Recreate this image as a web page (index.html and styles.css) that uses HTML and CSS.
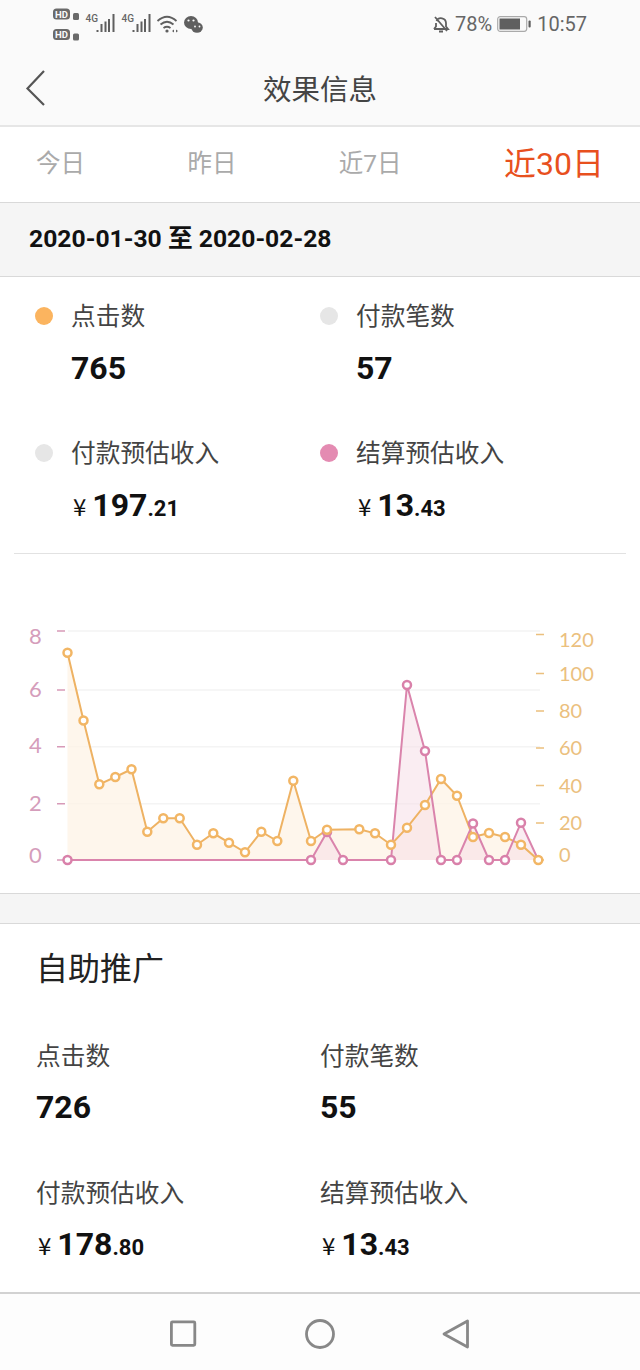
FILE: index.html
```html
<!DOCTYPE html>
<html lang="zh">
<head>
<meta charset="utf-8">
<title>效果信息</title>
<link rel="stylesheet" href="styles.css">
</head>
<body>
<div class="phone">
  <header class="top">
    <div class="status">
      <svg class="status-left" width="160" height="50" viewBox="0 0 160 50">
        <g class="ic">
          <rect x="1" y="8.500" width="17" height="11" rx="3.500"/>
          <text x="9.500" y="17.500" class="hd" text-anchor="middle">HD</text>
          <rect x="1" y="29" width="17" height="11" rx="3.500"/>
          <text x="9.500" y="38" class="hd" text-anchor="middle">HD</text>
          <rect x="21" y="13" width="6" height="7" rx="1.500"/>
          <rect x="21" y="33.500" width="6" height="7" rx="1.500"/>
        </g>
        <text x="33.500" y="22" class="g4">4G</text>
        <path class="fill" d="M44.500 32h2v-2h-2zM48.500 32h2v-8h-2zM52.500 32h2v-10.500h-2zM56 32h2v-13h-2zM60.500 32h2v-18h-2z"/>
        <text x="69.500" y="22" class="g4">4G</text>
        <path class="fill" d="M80.500 32h2v-2h-2zM84.500 32h2v-8h-2zM88.500 32h2v-10.500h-2zM92 32h2v-13h-2zM96.500 32h2v-18h-2z"/>
        <g class="wifi">
          <path d="M105.500 21q9.500-8.500 19 0M108.500 24.500q6.500-5.500 13 0M111.500 28q3.500-2.500 7 0"/>
        </g>
        <circle class="fill" cx="115" cy="31" r="1.600"/>
        <path class="fill" d="M120 31l2-1.500v3zM126 31l-2-1.500v3z"/>
        <g class="fill">
          <ellipse cx="139" cy="22.500" rx="7" ry="6.500"/>
          <ellipse cx="145" cy="27.500" rx="5.800" ry="5.200"/>
        </g>
        <circle cx="136.500" cy="20.500" r="1.100" fill="#fafafa"/>
        <circle cx="141.500" cy="20.500" r="1.100" fill="#fafafa"/>
        <circle cx="143" cy="26.500" r=".9" fill="#fafafa"/>
        <circle cx="147.500" cy="26.500" r=".9" fill="#fafafa"/>
      </svg>
      <div class="status-right">
        <svg width="18" height="18" viewBox="0 0 18 18" class="bell">
          <path d="M2 14h14l-2-2.500V8a5 5 0 0 0-9.500-2M4 8v3.500L2 14M7 16.500h4M3 2l12 14"/>
        </svg>
        <span class="pct">78%</span>
        <svg width="34" height="18" viewBox="0 0 34 18" class="batt">
          <rect x=".7" y="1.700" width="29" height="14.600" rx="2.500"/>
          <rect class="batt-in" x="2.500" y="3.500" width="20.500" height="11"/>
          <rect class="batt-in" x="31.500" y="5.500" width="2.200" height="7" rx="1"/>
        </svg>
        <span class="clock">10:57</span>
      </div>
    </div>
    <div class="nav">
      <svg class="back" width="22" height="38" viewBox="0 0 22 38"><path d="M19 2L2.500 19.500 19 36"/></svg>
      <h1 class="title">效果信息</h1>
    </div>
  </header>

  <nav class="tabs">
    <span class="tab">今日</span>
    <span class="tab">昨日</span>
    <span class="tab">近7日</span>
    <span class="tab active">近30日</span>
  </nav>

  <div class="range">2020-01-30 至 2020-02-28</div>

  <section class="summary">
    <div class="grid">
      <div class="metric">
        <div class="label"><i class="dot orange"></i>点击数</div>
        <div class="value">765</div>
      </div>
      <div class="metric">
        <div class="label"><i class="dot grey"></i>付款笔数</div>
        <div class="value">57</div>
      </div>
      <div class="metric">
        <div class="label"><i class="dot grey"></i>付款预估收入</div>
        <div class="value"><span class="yen">¥</span>197<small>.21</small></div>
      </div>
      <div class="metric">
        <div class="label"><i class="dot pink"></i>结算预估收入</div>
        <div class="value"><span class="yen">¥</span>13<small>.43</small></div>
      </div>
    </div>
  </section>

  <section class="chart">
    <svg width="640" height="339" viewBox="0 554 640 339">
      <g class="grid-lines">
        <path d="M68 631H540M68 690H540M68 746.700H540M68 803.700H540"/>
      </g>
      <g class="ticks-l">
        <path d="M57 631h8M57 690h8M57 746.700h8M57 803.700h8M57 860h8"/>
      </g>
      <g class="ticks-r">
        <path d="M536 634.500h8M536 673.500h8M536 711h8M536 748h8M536 785.500h8M536 823h8M536 860h8"/>
      </g>
      <g class="axis-l">
        <text x="29" y="644">8</text>
        <text x="29" y="697">6</text>
        <text x="29" y="753">4</text>
        <text x="29" y="811">2</text>
        <text x="29" y="863">0</text>
      </g>
      <g class="axis-r">
        <text x="559" y="647">120</text>
        <text x="559" y="681">100</text>
        <text x="559" y="718">80</text>
        <text x="559" y="755">60</text>
        <text x="559" y="793">40</text>
        <text x="559" y="830">20</text>
        <text x="559" y="862">0</text>
      </g>
      <path class="area-o" d="M67.500 860V652.700L83.500 720.500 99.300 784.300 115.300 777 131.500 769.300 147.300 831.700 163.300 818.300 179.700 818.300 197 844.700 213.300 833.300 229 842.700 245 852.300 261.300 831.700 277.300 841 293.300 780.700 311 841 327 829.700 359.300 829.300 375 833.300 391 844.700 407 827.700 425 805 441 779 457 795.700 473 837 489 833 505 837 521 844.700 538.300 860Z"/>
      <path class="area-p" d="M311 860L327 832 343 860H391L407 685 425 751 441 860H457L473 823.500 489 860H505L521 822.700 538.300 860Z"/>
      <path class="line-o" d="M67.500 652.700L83.500 720.500 99.300 784.300 115.300 777 131.500 769.300 147.300 831.700 163.300 818.300 179.700 818.300 197 844.700 213.300 833.300 229 842.700 245 852.300 261.300 831.700 277.300 841 293.300 780.700 311 841 327 829.700 359.300 829.300 375 833.300 391 844.700 407 827.700 425 805 441 779 457 795.700 473 837 489 833 505 837 521 844.700 538.300 860"/>
      <path class="line-p" d="M67.500 860H311L327 832 343 860H391L407 685 425 751 441 860H457L473 823.500 489 860H505L521 822.700 538.300 860"/>
      <g class="pts-p">
        <circle cx="67.500" cy="860" r="4"/><circle cx="311" cy="860" r="4"/><circle cx="327" cy="832" r="4"/>
        <circle cx="343" cy="860" r="4"/><circle cx="391" cy="860" r="4"/><circle cx="407" cy="685" r="4"/>
        <circle cx="425" cy="751" r="4"/><circle cx="441" cy="860" r="4"/><circle cx="457" cy="860" r="4"/>
        <circle cx="473" cy="823.500" r="4"/><circle cx="489" cy="860" r="4"/><circle cx="505" cy="860" r="4"/>
        <circle cx="521" cy="822.700" r="4"/>
      </g>
      <g class="pts-o">
        <circle cx="67.500" cy="652.700" r="4"/><circle cx="83.500" cy="720.500" r="4"/><circle cx="99.300" cy="784.300" r="4"/>
        <circle cx="115.300" cy="777" r="4"/><circle cx="131.500" cy="769.300" r="4"/><circle cx="147.300" cy="831.700" r="4"/>
        <circle cx="163.300" cy="818.300" r="4"/><circle cx="179.700" cy="818.300" r="4"/><circle cx="197" cy="844.700" r="4"/>
        <circle cx="213.300" cy="833.300" r="4"/><circle cx="229" cy="842.700" r="4"/><circle cx="245" cy="852.300" r="4"/>
        <circle cx="261.300" cy="831.700" r="4"/><circle cx="277.300" cy="841" r="4"/><circle cx="293.300" cy="780.700" r="4"/>
        <circle cx="311" cy="841" r="4"/><circle cx="327" cy="829.700" r="4"/><circle cx="359.300" cy="829.300" r="4"/>
        <circle cx="375" cy="833.300" r="4"/><circle cx="391" cy="844.700" r="4"/><circle cx="407" cy="827.700" r="4"/>
        <circle cx="425" cy="805" r="4"/><circle cx="441" cy="779" r="4"/><circle cx="457" cy="795.700" r="4"/>
        <circle cx="473" cy="837" r="4"/><circle cx="489" cy="833" r="4"/><circle cx="505" cy="837" r="4"/>
        <circle cx="521" cy="844.700" r="4"/><circle cx="538.300" cy="860" r="4"/>
      </g>
    </svg>
  </section>

  <div class="spacer"></div>

  <section class="self">
    <h2 class="self-title">自助推广</h2>
    <div class="grid self-grid">
      <div class="metric">
        <div class="label">点击数</div>
        <div class="value">726</div>
      </div>
      <div class="metric">
        <div class="label">付款笔数</div>
        <div class="value">55</div>
      </div>
      <div class="metric">
        <div class="label">付款预估收入</div>
        <div class="value"><span class="yen">¥</span>178<small>.80</small></div>
      </div>
      <div class="metric">
        <div class="label">结算预估收入</div>
        <div class="value"><span class="yen">¥</span>13<small>.43</small></div>
      </div>
    </div>
  </section>

  <footer class="sysnav">
    <svg width="28" height="28" viewBox="0 0 28 28"><rect x="1.400" y="1.900" width="23.400" height="23.400" rx="1"/></svg>
    <svg width="30" height="30" viewBox="0 0 30 30"><circle cx="15" cy="15" r="13.500"/></svg>
    <svg width="28" height="30" viewBox="0 0 28 30"><path d="M2 15L25.500 2V28Z"/></svg>
  </footer>
</div>
</body>
</html>
```
FILE: styles.css
```css
* { box-sizing: border-box; }
html, body { margin: 0; padding: 0; }
body {
  font-family: Roboto, "Noto Sans CJK SC", sans-serif;
  background: #fff;
  color: #111;
}
.phone {
  width: 640px;
  height: 1370px;
  display: flex;
  flex-direction: column;
  overflow: hidden;
}

/* top */
.top {
  height: 127px;
  flex: none;
  background: #fafafa;
  border-bottom: 2px solid #e6e6e6;
}
.status {
  height: 50px;
  display: flex;
  justify-content: space-between;
  padding-left: 52px;
  padding-right: 53px;
}
.ic rect { fill: #6a6a6a; }
.hd {
  font-size: 9.500px;
  font-weight: 700;
  fill: #fafafa;
  font-family: Roboto, sans-serif;
}
.g4 { font-size: 10px; font-weight: 500; fill: #666; font-family: Roboto, sans-serif; }
.fill { fill: #5f5f5f; }
.wifi path { fill: none; stroke: #5f5f5f; stroke-width: 1.800; }
.status-right {
  display: flex;
  align-items: center;
  height: 48px;
  color: #666;
  font-size: 20px;
}
.bell { margin-right: 5px; }
.bell path { fill: none; stroke: #5f5f5f; stroke-width: 1.800; }
.pct { margin-right: 5px; }
.batt { margin-right: 6px; }
.batt rect { fill: none; stroke: #aaa; stroke-width: 1.200; }
.batt .batt-in { fill: #5f5f5f; stroke: none; }
.nav {
  height: 75px;
  display: flex;
  align-items: center;
  justify-content: center;
  position: relative;
}
.back {
  position: absolute;
  left: 25px;
  top: 19px;
}
.back path { fill: none; stroke: #555; stroke-width: 2.200; }
.title {
  margin: 0;
  font-size: 28.500px;
  font-weight: 400;
  color: #444;
}

/* tabs */
.tabs {
  height: 75px;
  flex: none;
  display: flex;
  align-items: center;
  justify-content: space-between;
  padding: 0 36px 7px 36px;
  background: #fff;
}
.tab { font-size: 24.500px; color: #aaa; }
.tab.active { font-size: 32px; color: #e8501e; }

/* date range */
.range {
  height: 75px;
  flex: none;
  display: flex;
  align-items: center;
  padding: 0 0 7px 29px;
  background: #f5f5f5;
  border-top: 1px solid #d9d9d9;
  border-bottom: 1px solid #d9d9d9;
  font-size: 24.700px;
  font-weight: 700;
  color: #111;
}

/* metric blocks */
.grid {
  display: grid;
  grid-template-columns: 285px 1fr;
  row-gap: 48px;
}
.summary {
  flex: none;
  height: 277px;
  padding: 21px 14px 0;
  position: relative;
}
.summary .grid { padding-left: 57px; }
.summary::after {
  content: "";
  position: absolute;
  left: 14px;
  right: 14px;
  bottom: 0;
  height: 1px;
  background: #e2e2e2;
}
.metric { display: flex; flex-direction: column; }
.label {
  position: relative;
  height: 37px;
  line-height: 37px;
  font-size: 24.700px;
  color: #444;
}
.value {
  margin-top: 14px;
  height: 38px;
  line-height: 38px;
  font-size: 32px;
  font-weight: 700;
  color: #111;
}
.value small { font-size: 22px; font-weight: 700; }
.yen {
  font-family: "Noto Sans CJK SC", sans-serif;
  font-size: 24px;
  font-weight: 400;
  margin-left: 2px;
  margin-right: 6px;
}
.dot {
  position: absolute;
  left: -36px;
  top: 9px;
  width: 18px;
  height: 18px;
  border-radius: 50%;
}
.orange { background: #fbb45f; }
.grey { background: #e6e6e6; }
.pink { background: #e48bb2; }

/* chart */
.chart { flex: none; height: 339px; }
.chart svg { display: block; }
.grid-lines path { stroke: #f4f4f4; stroke-width: 1.500; fill: none; }
.ticks-l path { stroke: #d79ab8; stroke-width: 1.500; fill: none; }
.ticks-r path { stroke: #ebc07e; stroke-width: 1.500; fill: none; }
.axis-l text { font-size: 22px; fill: #d59dbb; font-family: Lato, sans-serif; }
.axis-r text { font-size: 20px; fill: #ebc07e; font-family: Lato, sans-serif; }
.area-o { fill: #fdf3e6; fill-opacity: .75; }
.area-p { fill: #f6dfe8; fill-opacity: .55; }
.line-o { fill: none; stroke: #eeb263; stroke-width: 2; }
.line-p { fill: none; stroke: #da84ac; stroke-width: 2; }
.pts-o circle { fill: #fff; stroke: #f2b665; stroke-width: 2.500; }
.pts-p circle { fill: #fff; stroke: #d981aa; stroke-width: 2.500; }

.spacer {
  height: 31px;
  flex: none;
  background: #f5f5f5;
  border-top: 1px solid #d9d9d9;
  border-bottom: 1px solid #d9d9d9;
}

/* self promo */
.self {
  flex: 1;
  padding: 20px 0 0 36px;
  background: #fff;
}
.self-title {
  margin: 0;
  height: 50px;
  line-height: 50px;
  font-size: 32px;
  font-weight: 400;
  color: #222;
}
.self-grid {
  margin-top: 44px;
  grid-template-columns: 284px 1fr;
  row-gap: 49px;
}
.self-grid .value { margin-top: 13px; }

/* system nav */
.sysnav {
  height: 78px;
  flex: none;
  position: relative;
  background: #fdfdfd;
  border-top: 2px solid #d2d2d2;
  display: flex;
  align-items: center;
  justify-content: space-between;
  padding: 3px 170px 0 170px;
}
.sysnav svg * { fill: none; stroke: #888; stroke-width: 2.800; stroke-linejoin: round; }
```
